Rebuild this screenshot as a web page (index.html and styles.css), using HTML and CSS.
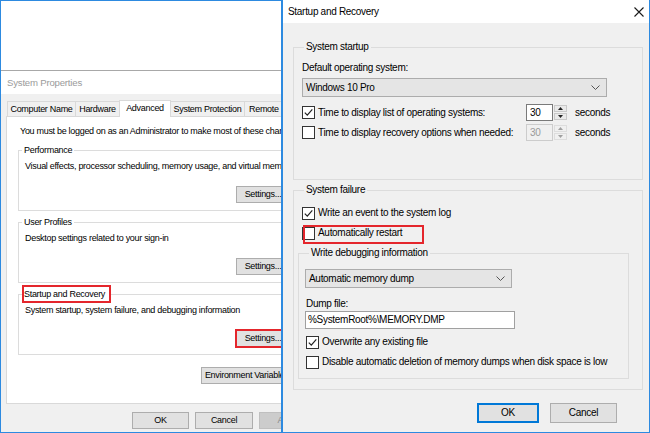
FILE: index.html
```html
<!DOCTYPE html>
<html lang="en">
<head>
<meta charset="utf-8">
<title>Startup and Recovery</title>
<link rel="stylesheet" href="styles.css">
</head>
<body>
<div class="screen">
  <div class="sysprops">
    <div class="behind"></div>
    <div class="sp-title">System Properties</div>
    <div class="sp-body">
      <div class="tabs">
        <div class="tab t1">Computer Name</div>
        <div class="tab t2">Hardware</div>
        <div class="tab t3 active">Advanced</div>
        <div class="tab t4">System Protection</div>
        <div class="tab t5">Remote</div>
      </div>
      <div class="panel">
        <div class="note">You must be logged on as an Administrator to make most of these changes.</div>
        <fieldset class="lg">
          <legend>Performance</legend>
          <div class="lt">Visual effects, processor scheduling, memory usage, and virtual memory</div>
          <div class="lbrow"><button class="btn lbtn">Settings...</button></div>
        </fieldset>
        <fieldset class="lg">
          <legend>User Profiles</legend>
          <div class="lt">Desktop settings related to your sign-in</div>
          <div class="lbrow"><button class="btn lbtn">Settings...</button></div>
        </fieldset>
        <fieldset class="lg">
          <legend><span class="redlabel">Startup and Recovery</span></legend>
          <div class="lt">System startup, system failure, and debugging information</div>
          <div class="lbrow"><button class="btn lbtn redbtn">Settings...</button></div>
        </fieldset>
        <div class="envrow"><button class="btn envbtn">Environment Variables...</button></div>
      </div>
      <div class="sp-buttons">
        <button class="btn lok">OK</button>
        <button class="btn lcancel">Cancel</button>
        <button class="btn lapply" disabled>Apply</button>
      </div>
    </div>
  </div>

  <div class="sr">
    <div class="sr-title">
      <span>Startup and Recovery</span>
      <svg class="close" width="10" height="10" viewBox="0 0 10 10"><path d="M0.5 0.5 L9.5 9.5 M9.5 0.5 L0.5 9.5" stroke="#1a1a1a" stroke-width="1.1" fill="none"/></svg>
    </div>
    <div class="sr-body">
      <fieldset class="rg startup">
        <legend>System startup</legend>
        <div class="rlabel">Default operating system:</div>
        <div class="select os">
          <span>Windows 10 Pro</span>
          <svg width="9" height="5" viewBox="0 0 9 5"><path d="M0.5 0.5 L4.5 4.5 L8.5 0.5" stroke="#555" fill="none"/></svg>
        </div>
        <div class="timerow first">
          <div class="cbrow">
            <span class="cb"><svg width="11" height="11" viewBox="0 0 11 11"><path d="M1.8 5.6 L4.3 8.2 L9.3 2.4" fill="none" stroke="#222" stroke-width="1.2"/></svg></span>
            <span>Time to display list of operating systems:</span>
          </div>
          <div class="spin">
            <div class="spin-input">30</div>
            <div class="spin-btns">
              <div class="sb"><svg width="5" height="3" viewBox="0 0 5 3"><path d="M0 3 L2.5 0 L5 3 Z" fill="#222"/></svg></div>
              <div class="sb"><svg width="5" height="3" viewBox="0 0 5 3"><path d="M0 0 L2.5 3 L5 0 Z" fill="#222"/></svg></div>
            </div>
          </div>
          <span class="secs">seconds</span>
        </div>
        <div class="timerow second">
          <div class="cbrow">
            <span class="cb"></span>
            <span>Time to display recovery options when needed:</span>
          </div>
          <div class="spin disabled">
            <div class="spin-input">30</div>
            <div class="spin-btns">
              <div class="sb"><svg width="5" height="3" viewBox="0 0 5 3"><path d="M0 3 L2.5 0 L5 3 Z" fill="#a0a0a0"/></svg></div>
              <div class="sb"><svg width="5" height="3" viewBox="0 0 5 3"><path d="M0 0 L2.5 3 L5 0 Z" fill="#a0a0a0"/></svg></div>
            </div>
          </div>
          <span class="secs">seconds</span>
        </div>
      </fieldset>

      <fieldset class="rg failure">
        <legend>System failure</legend>
        <div class="cbrow writeevent">
          <span class="cb"><svg width="11" height="11" viewBox="0 0 11 11"><path d="M1.8 5.6 L4.3 8.2 L9.3 2.4" fill="none" stroke="#222" stroke-width="1.2"/></svg></span>
          <span>Write an event to the system log</span>
        </div>
        <div class="cbrow autorestart">
          <span class="cb"></span>
          <span>Automatically restart</span>
        </div>
        <fieldset class="rg debug">
          <legend>Write debugging information</legend>
          <div class="select dumptype">
            <span>Automatic memory dump</span>
            <svg width="9" height="5" viewBox="0 0 9 5"><path d="M0.5 0.5 L4.5 4.5 L8.5 0.5" stroke="#555" fill="none"/></svg>
          </div>
          <div class="rlabel dumplabel">Dump file:</div>
          <div class="textbox">%SystemRoot%\MEMORY.DMP</div>
          <div class="cbrow overwrite">
            <span class="cb"><svg width="11" height="11" viewBox="0 0 11 11"><path d="M1.8 5.6 L4.3 8.2 L9.3 2.4" fill="none" stroke="#222" stroke-width="1.2"/></svg></span>
            <span>Overwrite any existing file</span>
          </div>
          <div class="cbrow disable">
            <span class="cb"></span>
            <span>Disable automatic deletion of memory dumps when disk space is low</span>
          </div>
        </fieldset>
      </fieldset>

      <div class="sr-buttons">
        <button class="btn rok">OK</button>
        <button class="btn rcancel">Cancel</button>
      </div>
    </div>
  </div>
</div>
</body>
</html>
```

FILE: styles.css
```css
* , *::before, *::after { box-sizing: border-box; }
html, body { margin: 0; padding: 0; }
body {
  width: 650px;
  height: 433px;
  overflow: hidden;
  background: #ffffff;
  font-family: "Liberation Sans", Arial, sans-serif;
  color: #000;
}
.screen { display: flex; width: 650px; height: 433px; }

/* ---------- generic ---------- */
.btn {
  display: block;
  margin: 0;
  padding: 0;
  font-family: inherit;
  font-size: inherit;
  letter-spacing: inherit;
  color: #000;
  background: #e1e1e1;
  border: 1px solid #adadad;
  text-align: center;
  white-space: nowrap;
  overflow: hidden;
}
fieldset {
  margin: 0;
  min-inline-size: 0;
  border: 1px solid #dcdcdc;
}
legend {
  padding: 0 2px;
  line-height: 12px;
}

/* ---------- System Properties (left) ---------- */
.sysprops {
  width: 282px;
  flex: none;
  height: 433px;
  border: 1px solid #2d8ae0;
  overflow: hidden;
  display: flex;
  flex-direction: column;
  background: #fff;
  font-size: 9px;
  letter-spacing: -0.3px;
}
.behind {
  height: 70px;
  flex: none;
  background: #fff;
  border-bottom: 1px solid #a8a8a8;
}
.sp-title {
  height: 23px;
  flex: none;
  line-height: 23px;
  padding-left: 6px;
  color: #9b9b9b;
  font-size: 9.6px;
  letter-spacing: -0.2px;
  background: #fff;
}
.sp-body {
  flex: 1;
  width: 420px;
  align-self: flex-start;
  background: #f0f0f0;
  padding: 7px 0 0 5px;
}
.tabs {
  display: flex;
  align-items: flex-end;
  height: 15px;
  padding-left: 1px;
}
.tab {
  height: 15px;
  line-height: 14px;
  border: 1px solid #d9d9d9;
  border-bottom: 0;
  background: #f0f0f0;
  text-align: center;
  margin-right: -1px;
  white-space: nowrap;
}
.t1 { width: 69px; }
.t2 { width: 45px; }
.t3 { width: 52px; }
.t4 { width: 75px; }
.t5 { width: 60px; text-align: left; padding-left: 4px; }
.tab.active {
  position: relative;
  z-index: 2;
  height: 17px;
  margin-bottom: -1px;
  background: #fff;
  line-height: 14px;
}
.panel {
  width: 400px;
  height: 288px;
  background: #fff;
  border: 1px solid #d9d9d9;
}
.note {
  margin: 7px 0 0 13px;
  line-height: 14px;
  white-space: nowrap;
}
.lg {
  width: 360px;
  margin: 5px 0 0 11px;
  padding: 4px 0 7px 0;
}
.note + .lg { margin-top: 6px; }
.lg legend { margin-left: 3px; }
.lt {
  margin-left: 6px;
  line-height: 12px;
  white-space: nowrap;
}
.lbrow { margin: 14px 0 0 217px; }
.lbtn { width: 54px; height: 17px; line-height: 15px; }
.redlabel {
  display: inline-block;
  line-height: 14px;
  margin: -1px 0;
  padding-right: 4px;
  outline: 2px solid #e4262c;
}
.redbtn {
  outline: 2px solid #e4262c;
  outline-offset: -1px;
}
.envrow { margin: 12px 0 0 194px; }
.envbtn { width: 98px; height: 17px; line-height: 15px; }
.sp-buttons {
  display: flex;
  gap: 6px;
  margin-top: 8px;
  padding-left: 126px;
}
.sp-buttons .btn { height: 17px; line-height: 15px; }
.lok { width: 57px; }
.lcancel { width: 58px; }
.lapply { width: 58px; background: #cccccc; border-color: #bfbfbf; color: #8a8a8a; }

/* ---------- Startup and Recovery (right) ---------- */
.sr {
  flex: 1;
  height: 433px;
  border: 1px solid #2d8ae0;
  border-top: 0;
  background: #f0f0f0;
  display: flex;
  flex-direction: column;
  font-size: 10px;
  letter-spacing: -0.3px;
}
.sr-title {
  height: 23px;
  flex: none;
  background: #fff;
  display: flex;
  align-items: center;
  justify-content: space-between;
  padding: 0 5px 0 5px;
  line-height: 23px;
}
.close { display: block; }
.sr-body {
  flex: 1;
  padding: 0 6px 0 10px;
}
.rg legend { margin-left: 2px; }
.startup {
  margin-top: 18px;
  padding: 9px 0 38px 8px;
}
.rlabel { line-height: 12px; white-space: nowrap; }
.select {
  display: flex;
  align-items: center;
  justify-content: space-between;
  height: 19px;
  background: #e5e5e5;
  border: 1px solid #acacac;
  padding: 0 6px 0 3px;
  white-space: nowrap;
}
.os { width: 305px; margin-top: 4px; }
.timerow {
  display: flex;
  align-items: center;
  height: 17px;
}
.timerow.first { margin-top: 7px; }
.timerow.second { margin-top: 3px; }
.timerow .cbrow { width: 224px; }
.cbrow {
  display: flex;
  align-items: center;
  gap: 3px;
  height: 14px;
  line-height: 14px;
  white-space: nowrap;
}
.cb {
  width: 13px;
  height: 13px;
  flex: none;
  border: 1px solid #333;
  background: #fff;
  display: flex;
  align-items: center;
  justify-content: center;
}
.cb svg { display: block; }
.spin {
  display: flex;
  align-items: stretch;
  width: 41px;
  height: 17px;
}
.spin-input {
  width: 27px;
  height: 17px;
  background: #fff;
  border: 1px solid #7a7a7a;
  line-height: 15px;
  padding-left: 3px;
}
.spin-btns {
  display: flex;
  flex-direction: column;
  justify-content: space-between;
  margin-left: 1px;
  padding: 1px 0;
  width: 13px;
}
.sb {
  height: 7px;
  background: #eaeaea;
  border: 1px solid #c9c9c9;
  display: flex;
  align-items: center;
  justify-content: center;
}
.sb svg { display: block; }
.spin.disabled .spin-input {
  border-color: #cccccc;
  background: #f0f0f0;
  color: #9a9a9a;
}
.spin.disabled .sb { background: #f0f0f0; border-color: #dddddd; }
.secs { margin-left: 8px; }

.failure {
  margin-top: 4px;
  padding: 10px 0 10px 8px;
}
.autorestart {
  position: relative;
  margin-top: 6px;
}
.autorestart::after {
  content: "";
  position: absolute;
  left: 1px;
  top: -1px;
  width: 121px;
  height: 19px;
  border: 2px solid #e4262c;
}
.debug {
  margin: 7px 13px 0 -4px;
  padding: 10px 0 9px 6px;
}
.debug legend { margin-left: 4px; }
.dumptype { width: 207px; }
.dumplabel { margin-top: 10px; margin-left: 1px; }
.textbox {
  width: 210px;
  height: 18px;
  margin-top: 1px;
  background: #fff;
  border: 1px solid #a0a0a0;
  line-height: 16px;
  padding-left: 2px;
  white-space: nowrap;
}
.overwrite { margin: 6px 0 0 1px; }
.disable { margin: 6px 0 0 1px; }
.sr-buttons {
  display: flex;
  justify-content: flex-end;
  gap: 11px;
  margin-top: 13px;
  padding-right: 26px;
}
.sr-buttons .btn { height: 20px; line-height: 18px; }
.rok { width: 62px; border-color: #0078d7; box-shadow: inset 0 0 0 1px #0078d7; }
.rcancel { width: 67px; }
```
